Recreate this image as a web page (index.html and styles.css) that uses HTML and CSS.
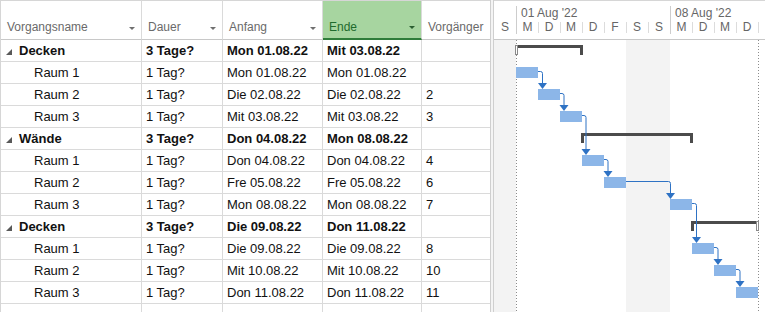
FILE: index.html
```html
<!DOCTYPE html>
<html lang="de">

<head>
    <meta charset="UTF-8" />
    <title>Gantt-Diagramm</title>
    <link rel="stylesheet" href="styles.css">
</head>

<body>
    <div class="view">
        <!-- Vorgangstabelle -->
        <div class="sheet">
            <div class="row head">
                <div class="cell"><span>Vorgangsname</span><i class="drop"></i></div>
                <div class="cell"><span>Dauer</span><i class="drop"></i></div>
                <div class="cell"><span>Anfang</span><i class="drop"></i></div>
                <div class="cell sorted"><span>Ende</span><i class="drop"></i></div>
                <div class="cell"><span>Vorgänger</span></div>
            </div>

            <div class="row summary">
                <div class="cell name"><svg class="twisty" width="6" height="6" viewBox="0 0 6 6"><polygon points="6,0 6,6 0,6" /></svg>Decken</div>
                <div class="cell">3 Tage?</div>
                <div class="cell">Mon 01.08.22</div>
                <div class="cell">Mit 03.08.22</div>
                <div class="cell"></div>
            </div>
            <div class="row">
                <div class="cell name sub">Raum 1</div>
                <div class="cell">1 Tag?</div>
                <div class="cell">Mon 01.08.22</div>
                <div class="cell">Mon 01.08.22</div>
                <div class="cell"></div>
            </div>
            <div class="row">
                <div class="cell name sub">Raum 2</div>
                <div class="cell">1 Tag?</div>
                <div class="cell">Die 02.08.22</div>
                <div class="cell">Die 02.08.22</div>
                <div class="cell">2</div>
            </div>
            <div class="row">
                <div class="cell name sub">Raum 3</div>
                <div class="cell">1 Tag?</div>
                <div class="cell">Mit 03.08.22</div>
                <div class="cell">Mit 03.08.22</div>
                <div class="cell">3</div>
            </div>

            <div class="row summary">
                <div class="cell name"><svg class="twisty" width="6" height="6" viewBox="0 0 6 6"><polygon points="6,0 6,6 0,6" /></svg>Wände</div>
                <div class="cell">3 Tage?</div>
                <div class="cell">Don 04.08.22</div>
                <div class="cell">Mon 08.08.22</div>
                <div class="cell"></div>
            </div>
            <div class="row">
                <div class="cell name sub">Raum 1</div>
                <div class="cell">1 Tag?</div>
                <div class="cell">Don 04.08.22</div>
                <div class="cell">Don 04.08.22</div>
                <div class="cell">4</div>
            </div>
            <div class="row">
                <div class="cell name sub">Raum 2</div>
                <div class="cell">1 Tag?</div>
                <div class="cell">Fre 05.08.22</div>
                <div class="cell">Fre 05.08.22</div>
                <div class="cell">6</div>
            </div>
            <div class="row">
                <div class="cell name sub">Raum 3</div>
                <div class="cell">1 Tag?</div>
                <div class="cell">Mon 08.08.22</div>
                <div class="cell">Mon 08.08.22</div>
                <div class="cell">7</div>
            </div>

            <div class="row summary">
                <div class="cell name"><svg class="twisty" width="6" height="6" viewBox="0 0 6 6"><polygon points="6,0 6,6 0,6" /></svg>Decken</div>
                <div class="cell">3 Tage?</div>
                <div class="cell">Die 09.08.22</div>
                <div class="cell">Don 11.08.22</div>
                <div class="cell"></div>
            </div>
            <div class="row">
                <div class="cell name sub">Raum 1</div>
                <div class="cell">1 Tag?</div>
                <div class="cell">Die 09.08.22</div>
                <div class="cell">Die 09.08.22</div>
                <div class="cell">8</div>
            </div>
            <div class="row">
                <div class="cell name sub">Raum 2</div>
                <div class="cell">1 Tag?</div>
                <div class="cell">Mit 10.08.22</div>
                <div class="cell">Mit 10.08.22</div>
                <div class="cell">10</div>
            </div>
            <div class="row">
                <div class="cell name sub">Raum 3</div>
                <div class="cell">1 Tag?</div>
                <div class="cell">Don 11.08.22</div>
                <div class="cell">Don 11.08.22</div>
                <div class="cell">11</div>
            </div>
            <div class="row">
                <div class="cell name"></div>
                <div class="cell"></div>
                <div class="cell"></div>
                <div class="cell"></div>
                <div class="cell"></div>
            </div>
        </div>

        <div class="split"></div>

        <!-- Balkendiagramm -->
        <div class="chart">
            <div class="scale">
                <div class="tier weeks">
                    <div></div>
                    <div class="wk">01 Aug '22</div>
                    <div class="wk">08 Aug '22</div>
                </div>
                <div class="tier days">
                    <div>S</div>
                    <div class="wk">M</div>
                    <div>D</div>
                    <div>M</div>
                    <div>D</div>
                    <div>F</div>
                    <div>S</div>
                    <div>S</div>
                    <div class="wk">M</div>
                    <div>D</div>
                    <div>M</div>
                    <div>D</div>
                    <div></div>
                </div>
            </div>

            <svg class="bars" width="271" height="272" viewBox="494 40 271 272">
                <!-- Wochenenden -->
                <rect class="weekend" x="494" y="40" width="22" height="272" />
                <rect class="weekend" x="626" y="40" width="44" height="272" />

                <!-- Projektanfang / Statusdatum -->
                <line class="dots" x1="516.5" y1="40" x2="516.5" y2="312" />
                <line class="dots" x1="758.5" y1="40" x2="758.5" y2="312" />

                <!-- Sammelvorgänge -->
                <g class="sum">
                    <rect x="515" y="45" width="68" height="3" />
                    <rect x="580" y="45" width="3" height="10" />
                    <rect x="581" y="133" width="112" height="3" />
                    <rect x="581" y="133" width="3" height="10" />
                    <rect x="690" y="133" width="3" height="10" />
                    <rect x="691" y="221" width="68" height="3" />
                    <rect x="691" y="221" width="3" height="10" />
                </g>
                <rect class="tab-open" x="515.5" y="45.5" width="2" height="9" />
                <rect class="tab-open" x="756.5" y="221.5" width="2" height="9" />

                <!-- Vorgänge -->
                <g class="task">
                    <rect x="516" y="67" width="22" height="11" />
                    <rect x="538" y="89" width="22" height="11" />
                    <rect x="560" y="111" width="22" height="11" />
                    <rect x="582" y="155" width="22" height="11" />
                    <rect x="604" y="177" width="22" height="11" />
                    <rect x="670" y="199" width="22" height="11" />
                    <rect x="692" y="243" width="22" height="11" />
                    <rect x="714" y="265" width="22" height="11" />
                    <rect x="736" y="287" width="22" height="11" />
                </g>

                <!-- Anordnungsbeziehungen -->
                <g class="link">
                    <path d="M538 71.5 H540.5 Q542.5 71.5 542.5 73.5 V84" />
                    <path d="M560 93.5 H562 Q564 93.5 564 95.5 V106" />
                    <path d="M582 115.5 H584 Q586 115.5 586 117.5 V150" />
                    <path d="M604 159.5 H606 Q608 159.5 608 161.5 V172" />
                    <path d="M626 181.5 H668.5 Q670.5 181.5 670.5 183.5 V194" />
                    <path d="M692 203.5 H694.5 Q696.5 203.5 696.5 205.5 V238" />
                    <path d="M714 247.5 H716 Q718 247.5 718 249.5 V260" />
                    <path d="M736 269.5 H738 Q740 269.5 740 271.5 V282" />
                </g>
                <g class="head">
                    <polygon points="538,83 547,83 542.5,89" />
                    <polygon points="559.5,105 568.5,105 564,111" />
                    <polygon points="581.5,149 590.5,149 586,155" />
                    <polygon points="603.5,171 612.5,171 608,177" />
                    <polygon points="666,193 675,193 670.5,199" />
                    <polygon points="692,237 701,237 696.5,243" />
                    <polygon points="713.5,259 722.5,259 718,265" />
                    <polygon points="735.5,281 744.5,281 740,287" />
                </g>
            </svg>
        </div>
    </div>
</body>

</html>
```

FILE: styles.css
```css
/* Grundlayout */
body {
    margin: 0;
    background: #fff;
    font-family: "Liberation Sans", Arial, sans-serif;
    font-size: 13px;
    color: #111;
    overflow: hidden;
}

.view {
    display: flex;
    width: 765px;
    height: 312px;
    overflow: hidden;
}

/* Tabelle */
.sheet {
    width: 490px;
    border-left: 1px solid #d6d6d6;
    box-sizing: border-box;
    flex: none;
}

.row {
    display: grid;
    grid-template-columns: 141px 81px 100px 99px 68px;
}

.cell {
    height: 22px;
    box-sizing: border-box;
    border-bottom: 1px solid #dadada;
    border-right: 1px solid #dadada;
    padding-left: 4px;
    line-height: 21px;
    white-space: nowrap;
    overflow: hidden;
}

.cell:last-child {
    border-right: none;
}

.summary .cell {
    font-weight: bold;
}

.name {
    display: flex;
    align-items: center;
    padding-left: 5px;
}

.name.sub {
    padding-left: 33px;
}

.twisty {
    fill: #595959;
    margin: 3px 7px 0 0;
}

/* Kopfzeile */
.head .cell {
    height: 40px;
    border-top: 1px solid #d6d6d6;
    border-bottom: 1px solid #c8c8c8;
    display: flex;
    align-items: flex-end;
    justify-content: space-between;
    padding: 0 6px 4px 6px;
    font-size: 12px;
    line-height: 15px;
    color: #6a6a6a;
}

.head .cell.sorted {
    background: #a7d5a0;
    border-bottom: 2px solid #2f7d3a;
    padding-bottom: 3px;
    color: #1f6a2d;
}

.drop {
    width: 0;
    height: 0;
    border-left: 3px solid transparent;
    border-right: 3px solid transparent;
    border-top: 3px solid #6f6f6f;
    margin-bottom: 5px;
}

.sorted .drop {
    border-top-color: #2b5e31;
    margin-bottom: 6px;
}

/* Trennleiste */
.split {
    width: 4px;
    flex: none;
    box-sizing: border-box;
    border-left: 1px solid #cfcfcf;
    border-right: 1px solid #cfcfcf;
    background: #f4f4f4;
}

/* Zeitskala */
.chart {
    width: 271px;
    flex: none;
}

.scale {
    height: 40px;
    box-sizing: border-box;
    border-top: 1px solid #d6d6d6;
    border-bottom: 1px solid #c8c8c8;
    padding-top: 5px;
    font-size: 12px;
    color: #666;
}

.tier {
    display: grid;
    height: 14px;
    line-height: 14px;
}

.weeks {
    grid-template-columns: 22px 154px 1fr;
}

.weeks .wk {
    border-left: 1px solid #cdcdcd;
    padding-left: 4px;
}

.days {
    grid-template-columns: repeat(12, 22px) 1fr;
    text-align: center;
}

.days div + div {
    background: linear-gradient(#dcdcdc, #dcdcdc) left 2px / 1px 11px no-repeat;
}

.days .wk {
    background: none;
    border-left: 1px solid #cdcdcd;
}

/* Balken */
.bars {
    display: block;
}

.weekend {
    fill: #f3f3f3;
}

.dots {
    stroke: #8c8c8c;
    stroke-width: 1;
    stroke-dasharray: 1 2;
}

.sum rect {
    fill: #4b4b4b;
}

.tab-open {
    fill: #fff;
    stroke: #8a8a8a;
    stroke-width: 1;
}

.task rect {
    fill: #8cb6e8;
}

.link path {
    fill: none;
    stroke: #2e72c4;
    stroke-width: 1;
}

.head polygon {
    fill: #2e72c4;
}
```
